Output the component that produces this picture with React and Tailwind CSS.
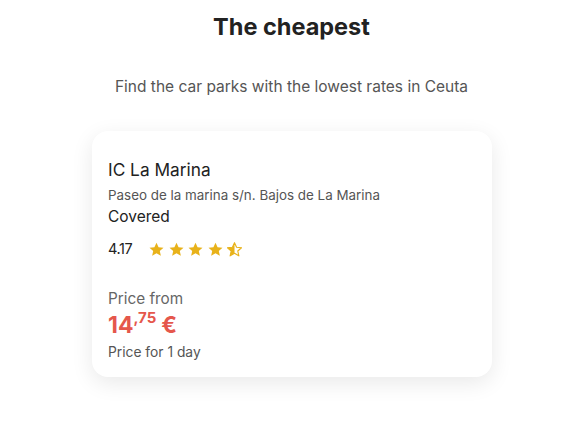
import React from "react";

const P = "M12 2.5l2.9 6.3 6.9.7-5.2 4.6 1.5 6.8L12 17.4l-6.1 3.5 1.5-6.8L2.2 9.5l6.9-.7z";

const Star = ({ half }) => (
  <svg width="15" height="15" viewBox="1.5 1.5 21 21">
    {half ? (
      <>
        <defs>
          <clipPath id="lh">
            <rect x="0" y="0" width="12" height="24" />
          </clipPath>
        </defs>
        <path d={P} fill="none" stroke="#e8b21a" strokeWidth="1.6" strokeLinejoin="round" />
        <path d={P} fill="#e8b21a" clipPath="url(#lh)" />
      </>
    ) : (
      <path d={P} fill="#e8b21a" />
    )}
  </svg>
);

export default function App() {
  return (
    <div
      className="w-[573px] h-[425px] bg-white flex flex-col items-center overflow-hidden"
      style={{ fontFamily: "'Inter', 'Noto Sans', sans-serif" }}
    >
      <h2 className="mt-[12px] ml-[10px] text-[23.5px] leading-[30px] font-bold text-[#222]">
        The cheapest
      </h2>
      <p className="mt-[34px] ml-[10px] text-[15.5px] leading-[22px] text-[#555]">
        Find the car parks with the lowest rates in Ceuta
      </p>
      <div className="mt-[33px] w-[400px] h-[246px] ml-[11px] bg-white rounded-[16px] shadow-[0_6px_22px_rgba(0,0,0,0.09)] px-[16px] pt-[28px] flex flex-col">
        <div className="text-[17.3px] leading-[22px] text-[#222]">IC La Marina</div>
        <div className="mt-[5px] text-[13.4px] leading-[18px] text-[#555]">
          Paseo de la marina s/n. Bajos de La Marina
        </div>
        <div className="mt-[3px] text-[15.5px] leading-[20px] text-[#222]">Covered</div>
        <div className="mt-[12px] flex items-center">
          <span className="text-[14.5px] leading-[20px] text-[#222] tracking-[-0.4px]">4.17</span>
          <div className="ml-[17px] flex gap-[4.5px]">
            <Star />
            <Star />
            <Star />
            <Star />
            <Star half />
          </div>
        </div>
        <div className="mt-[30px] text-[15.3px] leading-[20px] text-[#666]">Price from</div>
        <div className="mt-[2px] flex items-start text-[#e5574c] font-bold">
          <span className="text-[23px] leading-[28px]">14</span>
          <span className="text-[15px] leading-[18px] mt-[-2px]">,75</span>
          <span className="ml-[5px] text-[23px] leading-[28px]">€</span>
        </div>
        <div className="mt-[4px] text-[13.8px] leading-[18px] text-[#555]">Price for 1 day</div>
      </div>
    </div>
  );
}
